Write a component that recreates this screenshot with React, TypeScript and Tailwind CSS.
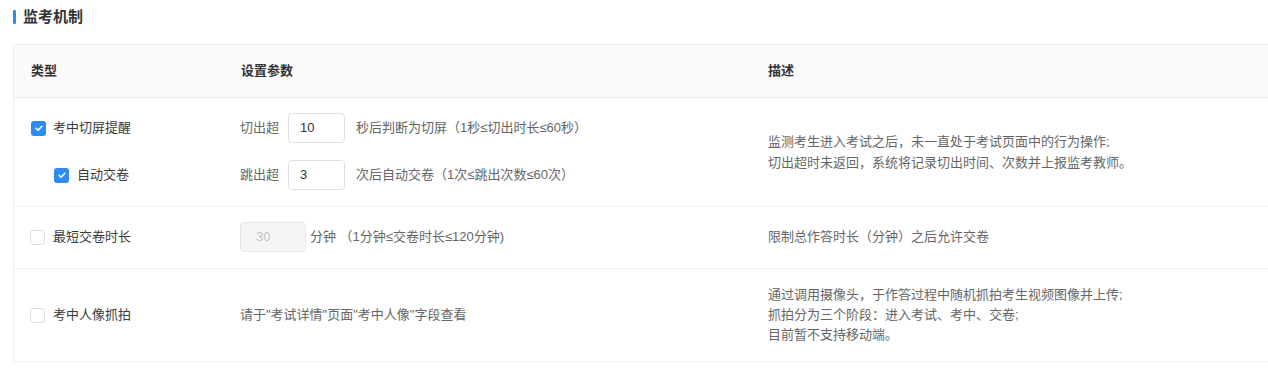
import React from "react";

const font = { fontFamily: '"Liberation Sans", "Noto Sans CJK SC", sans-serif' };

function Check({ on }: { on: boolean }) {
    if (on) {
        return (
            <span className="w-[15px] h-[15px] rounded-[3px] bg-[#2d8cf0] flex items-center justify-center shrink-0">
                <svg className="w-[10px] h-[10px]" viewBox="0 0 12 12" fill="none">
                    <path d="M2.5 6.2l2.4 2.4 4.6-4.8" stroke="#fff" strokeWidth="1.8" strokeLinecap="round" strokeLinejoin="round" />
                </svg>
            </span>
        );
    }
    return <span className="w-[15px] h-[15px] rounded-[3px] border border-[#dcdfe6] bg-white shrink-0" />;
}

function NumBox({ value, disabled }: { value: string; disabled?: boolean }) {
    return (
        <div
            className={
                disabled
                    ? "w-[66px] h-[30px] rounded-[4px] border border-[#e4e7ed] bg-[#f5f5f5] text-[#c0c4cc] text-[13px] flex items-center px-[15px]"
                    : "w-[57px] h-[30px] rounded-[4px] border border-[#dcdfe6] bg-white text-[#333] text-[13px] flex items-center px-[11px]"
            }
        >
            {value}
        </div>
    );
}

export default function App() {
    return (
        <div className="w-[1268px] h-[369px] bg-white overflow-hidden" style={font}>
            {/* Title */}
            <div className="flex items-center h-[32px] pl-[13px] pt-[1px]">
                <span className="w-[3px] h-[14px] rounded-[1px] bg-[#2d8cf0] mr-[7px] shrink-0" />
                <h2 className="text-[15px] font-bold text-[#333] leading-none">监考机制</h2>
            </div>

            <div className="ml-[13px] mt-[12px] border-l border-t border-[#efefef] w-[1300px]">
                {/* Header */}
                <div className="grid grid-cols-[210px_527px_1fr] h-[53px] bg-[#fafafa] border-b border-[#efefef] items-center text-[13px] font-bold text-[#333]">
                    <div className="pl-[17px]">类型</div>
                    <div className="pl-[17px]">设置参数</div>
                    <div className="pl-[17px]">描述</div>
                </div>

                {/* 切屏提醒 */}
                <div className="grid grid-cols-[210px_527px_1fr] border-b border-[#efefef] pt-[15px] pb-[16px] text-[13px]">
                    <div className="pl-[17px] flex flex-col gap-[17px]">
                        <div className="h-[30px] flex items-center gap-[7px] text-[#3a3a3a]">
                            <Check on />
                            考中切屏提醒
                        </div>
                        <div className="h-[30px] flex items-center gap-[8px] pl-[23px] text-[#3a3a3a]">
                            <Check on />
                            自动交卷
                        </div>
                    </div>
                    <div className="pl-[16px] flex flex-col gap-[17px] text-[#666]">
                        <div className="h-[30px] flex items-center">
                            <span className="mr-[9px]">切出超</span>
                            <NumBox value="10" />
                            <span className="ml-[11px]">秒后判断为切屏（1秒≤切出时长≤60秒）</span>
                        </div>
                        <div className="h-[30px] flex items-center">
                            <span className="mr-[9px]">跳出超</span>
                            <NumBox value="3" />
                            <span className="ml-[11px]">次后自动交卷（1次≤跳出次数≤60次）</span>
                        </div>
                    </div>
                    <div className="pl-[17px] flex flex-col justify-center text-[#666] leading-[21px]">
                        <p>监测考生进入考试之后，未一直处于考试页面中的行为操作;</p>
                        <p>切出超时未返回，系统将记录切出时间、次数并上报监考教师。</p>
                    </div>
                </div>

                {/* 最短交卷时长 */}
                <div className="grid grid-cols-[210px_527px_1fr] border-b border-[#efefef] pt-[15px] pb-[16px] text-[13px]">
                    <div className="pl-[16px] h-[30px] flex items-center gap-[8px] text-[#3a3a3a]">
                        <Check on={false} />
                        最短交卷时长
                    </div>
                    <div className="pl-[16px] h-[30px] flex items-center text-[#666]">
                        <NumBox value="30" disabled />
                        <span className="ml-[4px]">分钟 （1分钟≤交卷时长≤120分钟)</span>
                    </div>
                    <div className="pl-[17px] h-[30px] flex items-center text-[#666]">
                        限制总作答时长（分钟）之后允许交卷
                    </div>
                </div>

                {/* 考中人像抓拍 */}
                <div className="grid grid-cols-[210px_527px_1fr] border-b border-[#efefef] py-[16px] text-[13px]">
                    <div className="pl-[16px] flex items-center gap-[8px] text-[#3a3a3a]">
                        <Check on={false} />
                        考中人像抓拍
                    </div>
                    <div className="pl-[16px] flex items-center text-[#666]">
                        请于"考试详情"页面"考中人像"字段查看
                    </div>
                    <div className="pl-[17px] text-[#666] leading-[20px]">
                        <p>通过调用摄像头，于作答过程中随机抓拍考生视频图像并上传;</p>
                        <p>抓拍分为三个阶段：进入考试、考中、交卷;</p>
                        <p>目前暂不支持移动端。</p>
                    </div>
                </div>
            </div>
        </div>
    );
}
